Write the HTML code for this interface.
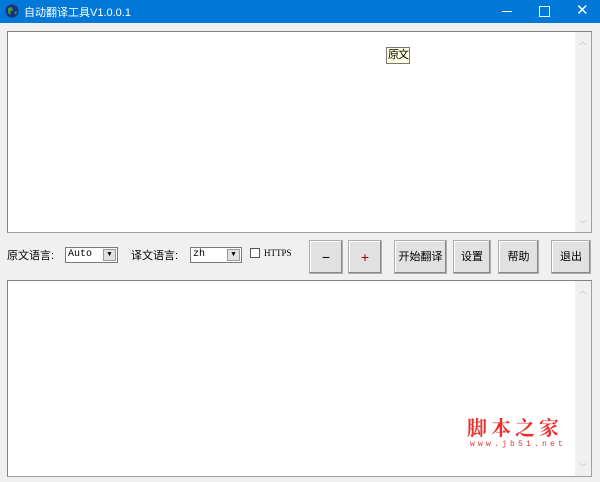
<!DOCTYPE html>
<html><head><meta charset="utf-8"><style>
body{margin:0;width:600px;height:482px;background:#f0f0f0;position:relative;overflow:hidden;font-family:"Liberation Sans","Noto Sans CJK SC",sans-serif;font-size:12px;color:#000}
.a{position:absolute;white-space:nowrap}
.tb{left:0;top:0;width:600px;height:23px;background:#0078d7;color:#fff}
.box{background:#fff;border:1px solid #a0a0a0;border-top-color:#828282;border-left-color:#828282;box-sizing:border-box}
.sb{background:#f0f0f0;width:16px}
.btn{background:#e1e1e1;border:1px solid #adadad;box-shadow:inset -1px -1px #888,inset 1px 1px #fff;box-sizing:border-box;text-align:center;font-size:11px}
.combo{background:#fff;border:1px solid #7a7a7a;box-sizing:border-box;height:16px;font:10px "Liberation Mono",monospace;line-height:14px;padding-left:2px}
.combo i{position:absolute;right:1px;top:1px;width:13px;height:12px;background:#e1e1e1;border:1px solid #999;box-sizing:border-box;font-style:normal;font-size:7px;text-align:center;line-height:11px}
</style></head><body>
<div class="a tb">
 <svg class="a" style="left:5px;top:4px" width="14" height="14"><circle cx="7" cy="7" r="6.5" fill="#1a2f80"/><path d="M3 4 L7 3 L8 6 L5 8 L6 11 L3 9Z" fill="#3c9a3c"/><path d="M9 8 L12 7 L11 11Z" fill="#3c9a3c"/></svg>
 <div class="a" style="left:24px;top:4px;font-size:11px">自动翻译工具V1.0.0.1</div>
 <div class="a" style="left:502px;top:11px;width:10px;height:1px;background:#fff"></div>
 <div class="a" style="left:539px;top:6px;width:9px;height:9px;border:1px solid #fff"></div>
 <div class="a" style="left:576px;top:1px;font-size:15px">✕</div>
</div>
<div class="a box" style="left:7px;top:31px;width:585px;height:202px"></div>
<div class="a sb" style="left:575px;top:32px;height:200px"><div style="color:#bbb;font-size:8px;text-align:center;margin-top:4px">︿</div><div style="color:#bbb;font-size:8px;text-align:center;margin-top:172px">﹀</div></div>
<div class="a" style="left:386px;top:47px;width:24px;height:17px;background:#ffffe1;border:1px solid #777;box-sizing:border-box;font-size:11px;line-height:15px;text-align:center;letter-spacing:-1px">原文</div>
<div class="a" style="left:7px;top:247px;font-size:11px">原文语言:</div>
<div class="a combo" style="left:65px;top:247px;width:53px">Auto<i>▼</i></div>
<div class="a" style="left:131px;top:247px;font-size:11px">译文语言:</div>
<div class="a combo" style="left:190px;top:247px;width:52px">zh<i>▼</i></div>
<div class="a" style="left:250px;top:248px;width:10px;height:10px;border:1px solid #555;background:#fff;box-sizing:border-box"></div>
<div class="a" style="left:264px;top:248px;font:9px 'Liberation Serif',serif">HTTPS</div>
<div class="a btn" style="left:309px;top:240px;width:34px;height:34px;line-height:32px;font-size:14px">−</div>
<div class="a btn" style="left:348px;top:240px;width:34px;height:34px;line-height:32px;font-size:14px;color:#a00">+</div>
<div class="a btn" style="left:394px;top:240px;width:53px;height:34px;line-height:32px">开始翻译</div>
<div class="a btn" style="left:453px;top:240px;width:38px;height:34px;line-height:32px">设置</div>
<div class="a btn" style="left:498px;top:240px;width:41px;height:34px;line-height:32px">帮助</div>
<div class="a btn" style="left:551px;top:240px;width:40px;height:34px;line-height:32px">退出</div>
<div class="a box" style="left:7px;top:280px;width:585px;height:197px"></div>
<div class="a sb" style="left:575px;top:281px;height:195px"><div style="color:#bbb;font-size:8px;text-align:center;margin-top:4px">︿</div><div style="color:#bbb;font-size:8px;text-align:center;margin-top:166px">﹀</div></div>
<div class="a" style="left:467px;top:412px;color:#e83030;font:bold 20px 'Noto Serif CJK SC',serif;letter-spacing:4px">脚本之家</div>
<div class="a" style="left:470px;top:440px;color:#e83030;font:8px 'Liberation Mono',monospace;letter-spacing:3.2px">www.jb51.net</div>
</body></html>
